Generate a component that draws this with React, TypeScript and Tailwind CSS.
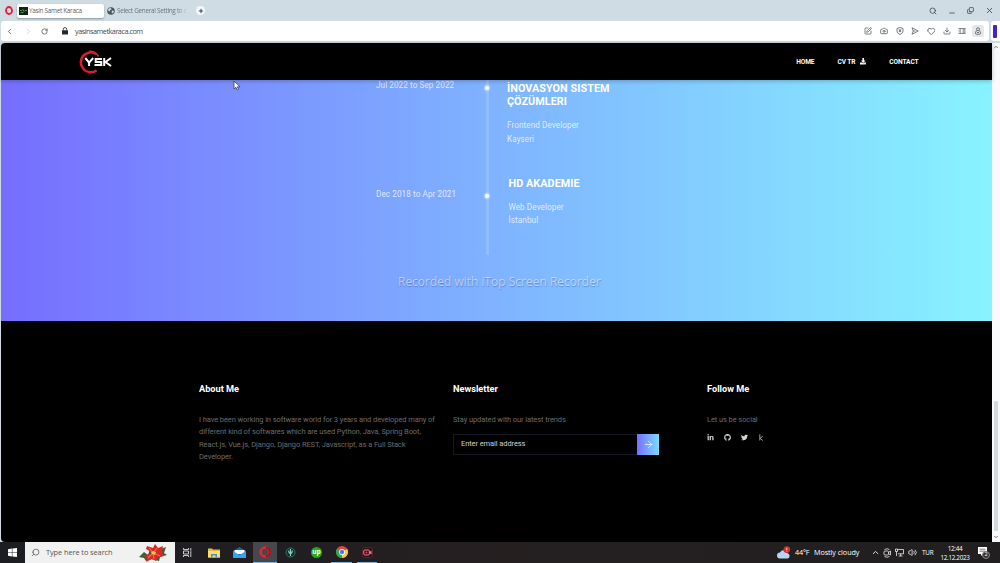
import React from "react";
import {
  Search, Minus, Copy, X, ChevronLeft, ChevronRight, RotateCw, SquarePen, Camera,
  Heart, Download, ChevronUp, ChevronDown, ArrowRight, Volume2, Plus,
} from "lucide-react";
import { FaDownload, FaLinkedinIn, FaGithub, FaTwitter } from "react-icons/fa";

function Tabs() {
  return (
    <div className="flex h-[21px] items-center bg-[#d0dce4] text-[#5b6369]">
      <svg className="ml-[5px] h-[9px] w-[8px]" viewBox="0 0 16 18">
        <ellipse cx="8" cy="9" rx="6" ry="7" fill="none" stroke="#ec1c32" strokeWidth="3.6" />
      </svg>
      <div className="ml-[4px] flex h-[14px] w-[87px] items-center rounded-[2px] bg-white pl-[2px] shadow-[0_1px_2px_#8b979f]">
        <svg className="h-[8px] w-[9px] shrink-0" viewBox="0 0 9 8">
          <rect width="9" height="8" fill="#16201a" />
          <path d="M1 3.5h2l1-1 1 2 1-1h2M1.5 5.5h3" fill="none" stroke="#4aa348" strokeWidth=".9" />
        </svg>
        <span className="ml-px whitespace-nowrap text-[6.4px] leading-[10px] tracking-[-0.3px]">Yasin Samet Karaca</span>
      </div>
      <div className="ml-[3px] flex w-[86px] items-center">
        <svg className="h-[8px] w-[8px] shrink-0" viewBox="0 0 16 16">
          <circle cx="8" cy="8" r="7.5" fill="#4c555b" />
          <path d="M3 3l5-1 1 3-3 1v3l-4-2zM10 7l4 1-2 5-3-2zM5 11l3 2" fill="#d0dce4" />
        </svg>
        <span className="ml-[2px] whitespace-nowrap bg-linear-to-r from-[#626c73] from-85% to-[#c4d0d8] bg-clip-text text-[6.4px] leading-[10px] tracking-[-0.3px] text-transparent">Select General Setting to c</span>
      </div>
      <span className="ml-[3px] flex size-[9px] items-center justify-center rounded-full bg-[#f4f8fb] text-[#23304a]">
        <Plus size={6} strokeWidth={3.5} />
      </span>
      <div className="ml-auto flex items-center gap-[11px] pr-[6px] text-[#3e474d]">
        <Search size={8} strokeWidth={2.4} />
        <Minus size={8} strokeWidth={2.4} className="mt-[5px]" />
        <Copy size={7} strokeWidth={2.6} className="-scale-y-100" />
        <X size={9} strokeWidth={2.2} />
      </div>
    </div>
  );
}

function AddressBar() {
  return (
    <div className="flex h-[22px] bg-[#d0dce4] pb-[2px] pl-px">
      <div className="flex h-[20px] w-[988px] items-center rounded-[3px] bg-white text-[#555c60]">
        <ChevronLeft size={9} strokeWidth={2.3} className="ml-[4px]" />
        <ChevronRight size={9} strokeWidth={2} className="ml-[10px] text-[#c3c8cb]" />
        <RotateCw size={7} strokeWidth={2.7} className="ml-[8px]" />
        <svg className="ml-[14px] h-[8px] w-[6px]" viewBox="0 0 6 8">
          <rect y="3.2" width="6" height="4.3" rx=".6" fill="#25292b" />
          <path d="M1.3 3.5V2.2a1.7 1.7 0 0 1 3.4 0v1.3" fill="none" stroke="#25292b" strokeWidth=".8" />
        </svg>
        <span className="ml-[7px] text-[7.3px] leading-[12px] tracking-[-0.5px] text-[#454b4f]">yasinsametkaraca.com</span>
        <div className="ml-auto flex items-center gap-[7.6px] pr-[5px]">
          <SquarePen size={8} strokeWidth={2.3} />
          <Camera size={8} strokeWidth={2.3} />
          <svg className="size-[8px]" viewBox="0 0 16 16" fill="none" stroke="currentColor" strokeWidth="1.6">
            <path d="M8 1l6 2v5c0 3.5-3 5.8-6 7-3-1.2-6-3.5-6-7V3z" />
            <path d="M5.5 5.5l5 4M10.5 5.5l-5 4M8 4.5v6" />
          </svg>
          <svg className="size-[8px]" viewBox="0 0 16 16" fill="none" stroke="currentColor" strokeWidth="1.6" strokeLinejoin="round">
            <path d="M2 1.5L14.5 8 2 14.5 4.5 8zM4.5 8H9" />
          </svg>
          <Heart size={8.5} strokeWidth={2.3} />
          <Download size={8} strokeWidth={2.3} />
          <svg className="size-[8px]" viewBox="0 0 16 16" fill="none" stroke="currentColor" strokeWidth="1.5">
            <path d="M1 3h14M1 13h14M1 8h5M9 8h6M9 5.5h6M3 5.5h3M3 10.5h3M9 10.5h6" />
          </svg>
          <span className="-ml-[2px] flex h-[12px] w-[12px] items-center justify-center rounded-[2px] bg-[#e5e8eb]">
            <svg className="size-[8px]" viewBox="0 0 16 16" fill="none" stroke="currentColor" strokeWidth="1.7">
              <circle cx="8" cy="4.5" r="3" /><path d="M6 7.2C3.7 8.2 3 10 3 12q0 2.5 2 2.5h6q2 0 2-2.5c0-2-.7-3.8-3-4.8M6 11h4" />
            </svg>
          </span>
        </div>
      </div>
      <div className="ml-[2px] flex h-[20px] w-[9px] items-center rounded-l-[3px] bg-white pl-[2px]">
        <div className="h-[13px] w-[4px] rounded-[1px] bg-[#4a22c8]" />
      </div>
    </div>
  );
}

function NavBar() {
  return (
    <header className="relative z-10 flex h-[37px] items-center rounded-tl-[4px] bg-black text-[6.6px] font-bold text-white shadow-[0_1px_4px_rgba(0,0,0,0.25)]">
      <svg className="ml-[77px] h-[26px] w-[36px]" viewBox="0 0 36 26">
        <path d="M18.6 5.2A10 10 0 1 0 18.6 21.5" fill="none" stroke="#d81f2b" strokeWidth="2.5" />
        <path d="M20.5 7.5A10.5 10.5 0 0 0 11 2.2" fill="none" stroke="#d81f2b" strokeWidth="1.6" />
        <path d="M7.3 9l3.8 4.6V17M15.2 9l-4.1 4.6M24 10h-6.3v3h5.6v3h-6.8M26.2 9v8M33 9l-5.5 4L33 17" fill="none" stroke="#fff" strokeWidth="2" />
      </svg>
      <nav className="ml-auto flex items-center pr-[73.5px] leading-[10px] tracking-[-0.1px]">
        <a>HOME</a>
        <a className="ml-[23px] flex items-center gap-[4.5px]">CV TR <FaDownload size={6.5} /></a>
        <a className="ml-[23px]">CONTACT</a>
      </nav>
    </header>
  );
}

function Dot() {
  return <div className="size-[4px] rounded-full bg-white shadow-[0_0_2px_1px_rgba(255,255,255,0.5)]" />;
}

function Experience() {
  return (
    <section className="relative flex h-[241px] bg-linear-to-r from-[#766dff] to-[#88f3ff] text-[8.2px] tracking-[0.06px] text-white/75">
      <div className="w-[109px] ml-[375px] whitespace-nowrap leading-[14px]">
        <p className="-mt-[2px]">Jul 2022 to Sep 2022</p>
        <p className="mt-[94.5px]">Dec 2018 to Apr 2021</p>
      </div>
      <div className="flex w-[4px] flex-col items-center">
        <div className="h-[6px] w-[3px] bg-white/15" />
        <Dot />
        <div className="h-[104px] w-[3px] bg-white/15" />
        <Dot />
        <div className="h-[57px] w-[3px] bg-white/15" />
      </div>
      <div className="ml-[18px] leading-[13.5px]">
        <h3 className="mt-[2px] text-[10.8px] font-bold leading-[13px] text-white">İNOVASYON SISTEM<br />ÇÖZÜMLERI</h3>
        <p className="mt-[11px]">Frontend Developer<br />Kayseri</p>
        <div className="ml-[1.5px]">
          <h3 className="mt-[31px] text-[10.8px] font-bold leading-[13px] text-white">HD AKADEMIE</h3>
          <p className="mt-[10.5px]">Web Developer<br />İstanbul</p>
        </div>
      </div>
      <p className="absolute left-[397px] top-[193px] whitespace-nowrap font-['Open_Sans'] text-[12px] leading-[17px] tracking-[-0.01px] text-white/50 [text-shadow:0.5px_1px_1px_rgba(40,70,130,0.4)]">Recorded with iTop Screen Recorder</p>
    </section>
  );
}

function Footer() {
  return (
    <footer className="flex h-[221px] rounded-bl-[4px] bg-black pl-[198px] pt-[61px] text-[7.5px] leading-[12.6px] tracking-[-0.09px] text-[#6c6c6c]">
      <div className="w-[254px]">
        <h4 className="text-[9.2px] font-bold leading-[14px] tracking-normal text-white">About Me</h4>
        <p className="mt-[17.5px] whitespace-nowrap">
          I have been working in software world for 3 years and developed many of<br />
          different kind of softwares which are used Python, Java, Spring Boot,<br />
          React.js, Vue.js, Django, Django REST, Javascript, as a Full Stack<br />
          Developer.
        </p>
      </div>
      <div className="w-[254px]">
        <h4 className="text-[9.2px] font-bold leading-[14px] tracking-normal text-white">Newsletter</h4>
        <p className="mt-[17.5px]">Stay updated with our latest trends</p>
        <div className="mt-[7.5px] flex h-[21px] w-[206px] border border-[#171722]">
          <span className="flex flex-1 items-center pl-[7px] text-[#d2d2d2]">Enter email address</span>
          <span className="-my-px -mr-px flex w-[22px] items-center justify-center bg-linear-to-r from-[#766dff] to-[#78dcff] text-white">
            <ArrowRight size={11} strokeWidth={1.5} />
          </span>
        </div>
      </div>
      <div>
        <h4 className="text-[9.2px] font-bold leading-[14px] tracking-normal text-white">Follow Me</h4>
        <p className="mt-[17.5px]">Let us be social</p>
        <div className="mt-[8px] flex items-center text-[#d6d6d6]">
          <FaLinkedinIn size={7} />
          <FaGithub size={7} className="ml-[10px]" />
          <FaTwitter size={7} className="ml-[10px]" />
          <svg className="ml-[11px] h-[7px] w-[5px]" viewBox="0 0 5 7">
            <path d="M.8.3v6.2M3.8 2.2L1 4.3l2.8 2.2" fill="none" stroke="#aaa" strokeWidth=".9" />
          </svg>
        </div>
      </div>
    </footer>
  );
}

function ScrollBar() {
  return (
    <div className="flex h-[499px] w-[8px] flex-col items-center bg-[#f8fafb] text-[#454c50]">
      <ChevronUp size={6} strokeWidth={3} className="mt-px" />
      <div className="mt-[351px] h-[130px] w-[4px] rounded-[1px] bg-[#d3dadf]" />
      <ChevronDown size={6} strokeWidth={3} className="mt-[3px]" />
    </div>
  );
}

function TaskBar() {
  return (
    <div className="flex h-[21px] items-center bg-linear-to-r from-[#1c1d23] via-[#251f20] to-[#211f20] font-['Open_Sans'] text-[7.4px] text-white">
      <svg className="ml-[8px] h-[9px] w-[9px]" viewBox="0 0 9 9" fill="white">
        <path d="M0 1.2L3.9.6v3.6H0zM4.4.5L9 0v4.2H4.4zM0 4.8h3.9v3.6L0 7.8zM4.4 4.8H9V9l-4.6-.6z" />
      </svg>
      <div className="ml-[8px] flex h-[21px] w-[150px] items-center bg-[#f1f1f2] pl-[6px] text-[#555]">
        <Search size={9} strokeWidth={2} className="-scale-x-100" />
        <span className="ml-[6px] w-[92px] whitespace-nowrap tracking-[-0.08px]">Type here to search</span>
        <svg className="h-[19px] w-[30px]" viewBox="0 0 30 19">
          <path d="M1 14l5-5 4 3 2-6 8 1 8-3-2 6 3 2-7 2-1 4-8-2-5 2-2-3z" fill="#376138" />
          <path d="M15 10L8 6l1-3 6 2 2-4 3 4 5-2-1 6 2 4-6 1-2 4-4-2-6 3 1-5-5-1z" fill="#d92925" />
          <path d="M15 10L11 5M15 10l4-5M15 10l7 3M15 10l-5 5M15 10l1 6" stroke="#f0685a" strokeWidth="1.2" />
          <path d="M13 9l2-1 3 1-1 3-3-1z" fill="#eac04d" />
        </svg>
      </div>
      <svg className="ml-[8px] h-[9px] w-[9px]" viewBox="0 0 9 9" fill="none" stroke="#ddd" strokeWidth=".9">
        <path d="M.5 0v1.5h5V0M.5 3h5v3h-5zM.5 9V7.5h5V9M7.8 0v2M7.8 4v5M7 3h1.6" />
      </svg>
      <svg className="ml-[16px] h-[10px] w-[12px]" viewBox="0 0 12 10">
        <path d="M0 .5h4l1 1h7v8H0z" fill="#e8b844" />
        <path d="M0 3h12v6.5H0z" fill="#ffda75" />
        <path d="M3 9.5V6h6v3.5H7.5v-2h-3v2z" fill="#3c94ce" />
      </svg>
      <svg className="ml-[13px] h-[11px] w-[13px]" viewBox="0 0 13 11">
        <path d="M0 4l6.5-4L13 4v7H0z" fill="#1267b0" />
        <path d="M1.5 3h10v4h-10z" fill="#fff" />
        <path d="M0 4l6.5 4L13 4v7H0z" fill="#35a3e9" />
      </svg>
      <div className="ml-[7px] flex h-[21px] w-[24px] items-center justify-center border-b border-[#76b9ed] bg-[#47484d]">
        <svg className="h-[12px] w-[12px]" viewBox="0 0 12 12">
          <ellipse cx="6" cy="6" rx="4.3" ry="4.6" fill="none" stroke="#e22632" strokeWidth="2.5" />
          <path d="M7 1.8c2 0 3.8 1.8 3.8 4.2S9 10.2 7 10.2" fill="none" stroke="#a61220" strokeWidth="2" />
        </svg>
      </div>
      <svg className="ml-[8px] h-[11px] w-[11px]" viewBox="0 0 11 11">
        <circle cx="5.5" cy="5.5" r="4.5" fill="#132b2b" stroke="#487f79" strokeWidth=".8" />
        <path d="M5.5 2v7M3.7 3.5c0 2 .5 3 1.8 3s1.8-1 1.8-3" fill="none" stroke="#8fd4c5" strokeWidth="1.1" />
      </svg>
      <span className="ml-[15px] flex size-[11px] items-center justify-center rounded-full bg-[#27a916] pb-[2px] text-[6.5px] font-bold leading-[8px]">up</span>
      <div className="ml-[9px] flex h-[21px] w-[21px] items-center justify-center border-b border-[#76b9ed]">
        <svg className="h-[12px] w-[12px]" viewBox="0 0 12 12">
          <circle cx="6" cy="6" r="6" fill="#e9443a" />
          <path d="M6 6L.8 3A6 6 0 0 0 6 12z" fill="#2fa653" />
          <path d="M6 6l5.2-3A6 6 0 0 1 6 12z" fill="#fccb37" />
          <circle cx="6" cy="6" r="2.9" fill="#fff" />
          <circle cx="6" cy="6" r="2.2" fill="#3e82ee" />
        </svg>
      </div>
      <div className="ml-[5px] flex h-[21px] w-[20px] items-center justify-center border-b border-[#76b9ed]">
        <svg className="h-[11px] w-[11px]" viewBox="0 0 11 11">
          <rect x=".5" y=".5" width="10" height="10" rx="2" fill="#281218" stroke="#6d2934" strokeWidth=".7" />
          <rect x="1.8" y="3" width="5.5" height="5" rx="1" fill="none" stroke="#f57e8d" strokeWidth="1" />
          <path d="M7.3 5l2.2-1.5v4L7.3 6z" fill="#f57e8d" />
          <circle cx="4.5" cy="5.5" r="1" fill="#ff3247" />
        </svg>
      </div>
      <div className="ml-auto flex items-center">
        <svg className="h-[14px] w-[14px]" viewBox="0 0 14 14">
          <path d="M3 12.5a3 3 0 0 1 0-6 4 4 0 0 1 7.4.8 2.7 2.7 0 0 1 .4 5.2z" fill="#b9d3f4" />
          <circle cx="9.8" cy="3.6" r="3.4" fill="#d42c26" />
          <path d="M9.8 1.8v2.3M9.8 4.8v.8" stroke="#fff" strokeWidth=".8" />
        </svg>
        <span className="ml-[4px] w-[19px] whitespace-nowrap text-[7.2px] tracking-[-0.15px]">44°F</span>
        <span className="w-[57px] whitespace-nowrap text-[7.2px] tracking-[-0.05px]">Mostly cloudy</span>
        <ChevronUp size={9} strokeWidth={2.3} />
        <svg className="ml-[3px] h-[10px] w-[8px]" viewBox="0 0 8 10" fill="none" stroke="#eee" strokeWidth=".8">
          <path d="M1.5 1.5Q4 0 6.5 1.5M1.5 8.5Q4 10 6.5 8.5" /><rect x="1" y="3" width="4.5" height="4" rx="1" /><path d="M5.5 4.5L7.5 3v4L5.5 5.7" />
        </svg>
        <svg className="ml-[4px] h-[9px] w-[9px]" viewBox="0 0 9 9" fill="none" stroke="#eee" strokeWidth=".8">
          <path d="M2.5 1.5h6v4.3H3M5.7 5.8V8M3.8 8h3.7" /><path d="M.5 1h2v2.5h-2zM1.5 3.5V8" />
        </svg>
        <Volume2 size={9} strokeWidth={2} className="ml-[4px]" />
        <span className="ml-[5px] w-[18px] text-[6.3px] tracking-[-0.2px]">TUR</span>
        <div className="w-[30px] text-center text-[6.3px] leading-[9px] tracking-[-0.3px]">
          <p>12:44</p>
          <p className="-mx-[2px] whitespace-nowrap">12.12.2023</p>
        </div>
        <div className="relative ml-[8px] h-[12px] w-[22px]">
          <svg className="h-[10px] w-[9px]" viewBox="0 0 9 10">
            <path d="M0 0h9v7H5L3 9V7H0z" fill="#fff" />
            <path d="M1.5 2.2h6M1.5 4.2h6" stroke="#444" strokeWidth=".7" />
          </svg>
          <span className="absolute left-[4px] top-[4px] flex size-[8px] items-center justify-center rounded-full border border-[#888] bg-[#333] text-[5.5px] leading-[7px]">2</span>
        </div>
      </div>
    </div>
  );
}

export default function App() {
  return (
    <div className="relative flex h-[563px] w-[1000px] flex-col overflow-hidden bg-[#d0dce4] font-[Roboto]">
      <div className="font-['Open_Sans']">
        <Tabs />
        <AddressBar />
      </div>
      <div className="flex h-[499px] pl-px">
        <main className="w-[991px]">
          <NavBar />
          <Experience />
          <Footer />
        </main>
        <ScrollBar />
      </div>
      <TaskBar />
      <svg className="absolute left-[233px] top-[80px] h-[11px] w-[8px]" viewBox="0 0 8 11">
        <path d="M1 1v8l1.9-1.7L4.2 10l1.3-.6-1.2-2.6H7z" fill="#fff" stroke="#273244" strokeWidth=".7" />
      </svg>
    </div>
  );
}
